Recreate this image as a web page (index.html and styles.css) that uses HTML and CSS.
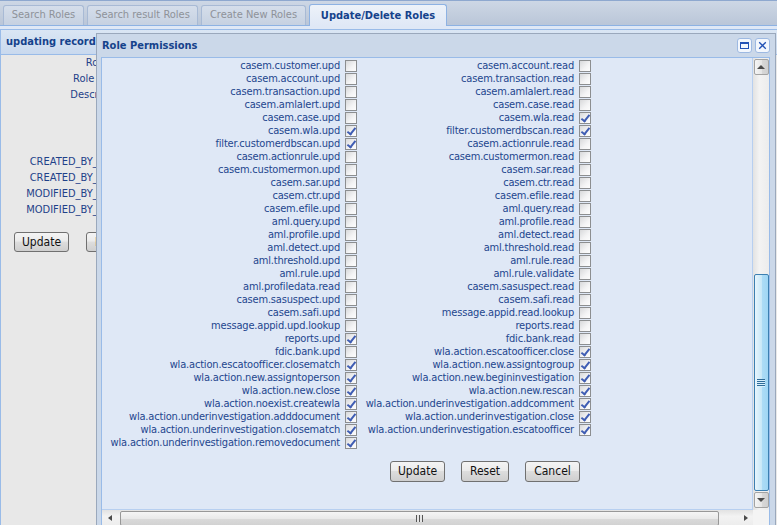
FILE: index.html
```html
<!DOCTYPE html>
<html>
<head>
<meta charset="utf-8">
<title>Update/Delete Roles</title>
<link rel="stylesheet" href="styles.css">
</head>
<body>
<div class="tabstrip">
  <div class="tab t1">Search Roles</div>
  <div class="tab t2">Search result Roles</div>
  <div class="tab t3">Create New Roles</div>
  <div class="tab t4 active">Update/Delete Roles</div>
</div>
<div class="tabgap"></div>
<div class="panel">
  <div class="panel-header">updating record</div>
  <div class="form">
    <div class="frow"><label>Role No.:</label></div>
    <div class="frow"><label>Role Name:</label></div>
    <div class="frow tall"><label>Description:</label></div>
    <div class="frow"><label>CREATED_BY_NAME:</label></div>
    <div class="frow"><label>CREATED_BY_NAME:</label></div>
    <div class="frow"><label>MODIFIED_BY_NAME:</label></div>
    <div class="frow"><label>MODIFIED_BY_NAME:</label></div>
    <div class="fbuttons">
      <button class="btn fb-update">Update</button>
      <button class="btn fb-reset">Reset</button>
    </div>
  </div>
</div>

<div class="modal">
  <div class="modal-head">
    <span class="modal-title">Role Permissions</span>
    <span class="tools">
      <span class="tool"><svg width="15" height="15" viewBox="0 0 15 15"><rect x="0.5" y="0.5" width="14" height="14" rx="2.5" fill="#f3f7fd" stroke="#9db9e2"/><rect x="3.5" y="4.5" width="8" height="6" fill="none" stroke="#2352b5"/><rect x="3" y="4" width="9" height="2" fill="#2352b5"/></svg></span>
      <span class="tool"><svg width="15" height="15" viewBox="0 0 15 15"><rect x="0.5" y="0.5" width="14" height="14" rx="2.5" fill="#f3f7fd" stroke="#9db9e2"/><path d="M4.2 4.2l6.6 6.6M10.8 4.2l-6.6 6.6" stroke="#2352b5" stroke-width="1.3" fill="none"/></svg></span>
    </span>
  </div>
  <div class="modal-body">
    <div class="content">
      <div class="perms">
        <label class="pl">casem.customer.upd</label><input type="checkbox" class="cb"><label class="pl">casem.account.read</label><input type="checkbox" class="cb">
        <label class="pl">casem.account.upd</label><input type="checkbox" class="cb"><label class="pl">casem.transaction.read</label><input type="checkbox" class="cb">
        <label class="pl">casem.transaction.upd</label><input type="checkbox" class="cb"><label class="pl">casem.amlalert.read</label><input type="checkbox" class="cb">
        <label class="pl">casem.amlalert.upd</label><input type="checkbox" class="cb"><label class="pl">casem.case.read</label><input type="checkbox" class="cb">
        <label class="pl">casem.case.upd</label><input type="checkbox" class="cb"><label class="pl">casem.wla.read</label><input type="checkbox" class="cb" checked>
        <label class="pl">casem.wla.upd</label><input type="checkbox" class="cb" checked><label class="pl">filter.customerdbscan.read</label><input type="checkbox" class="cb" checked>
        <label class="pl">filter.customerdbscan.upd</label><input type="checkbox" class="cb" checked><label class="pl">casem.actionrule.read</label><input type="checkbox" class="cb">
        <label class="pl">casem.actionrule.upd</label><input type="checkbox" class="cb"><label class="pl">casem.customermon.read</label><input type="checkbox" class="cb">
        <label class="pl">casem.customermon.upd</label><input type="checkbox" class="cb"><label class="pl">casem.sar.read</label><input type="checkbox" class="cb">
        <label class="pl">casem.sar.upd</label><input type="checkbox" class="cb"><label class="pl">casem.ctr.read</label><input type="checkbox" class="cb">
        <label class="pl">casem.ctr.upd</label><input type="checkbox" class="cb"><label class="pl">casem.efile.read</label><input type="checkbox" class="cb">
        <label class="pl">casem.efile.upd</label><input type="checkbox" class="cb"><label class="pl">aml.query.read</label><input type="checkbox" class="cb">
        <label class="pl">aml.query.upd</label><input type="checkbox" class="cb"><label class="pl">aml.profile.read</label><input type="checkbox" class="cb">
        <label class="pl">aml.profile.upd</label><input type="checkbox" class="cb"><label class="pl">aml.detect.read</label><input type="checkbox" class="cb">
        <label class="pl">aml.detect.upd</label><input type="checkbox" class="cb"><label class="pl">aml.threshold.read</label><input type="checkbox" class="cb">
        <label class="pl">aml.threshold.upd</label><input type="checkbox" class="cb"><label class="pl">aml.rule.read</label><input type="checkbox" class="cb">
        <label class="pl">aml.rule.upd</label><input type="checkbox" class="cb"><label class="pl">aml.rule.validate</label><input type="checkbox" class="cb">
        <label class="pl">aml.profiledata.read</label><input type="checkbox" class="cb"><label class="pl">casem.sasuspect.read</label><input type="checkbox" class="cb">
        <label class="pl">casem.sasuspect.upd</label><input type="checkbox" class="cb"><label class="pl">casem.safi.read</label><input type="checkbox" class="cb">
        <label class="pl">casem.safi.upd</label><input type="checkbox" class="cb"><label class="pl">message.appid.read.lookup</label><input type="checkbox" class="cb">
        <label class="pl">message.appid.upd.lookup</label><input type="checkbox" class="cb"><label class="pl">reports.read</label><input type="checkbox" class="cb">
        <label class="pl">reports.upd</label><input type="checkbox" class="cb" checked><label class="pl">fdic.bank.read</label><input type="checkbox" class="cb">
        <label class="pl">fdic.bank.upd</label><input type="checkbox" class="cb"><label class="pl">wla.action.escatoofficer.close</label><input type="checkbox" class="cb" checked>
        <label class="pl">wla.action.escatoofficer.closematch</label><input type="checkbox" class="cb" checked><label class="pl">wla.action.new.assigntogroup</label><input type="checkbox" class="cb" checked>
        <label class="pl">wla.action.new.assigntoperson</label><input type="checkbox" class="cb" checked><label class="pl">wla.action.new.begininvestigation</label><input type="checkbox" class="cb" checked>
        <label class="pl">wla.action.new.close</label><input type="checkbox" class="cb" checked><label class="pl">wla.action.new.rescan</label><input type="checkbox" class="cb" checked>
        <label class="pl">wla.action.noexist.createwla</label><input type="checkbox" class="cb" checked><label class="pl">wla.action.underinvestigation.addcomment</label><input type="checkbox" class="cb" checked>
        <label class="pl">wla.action.underinvestigation.adddocument</label><input type="checkbox" class="cb" checked><label class="pl">wla.action.underinvestigation.close</label><input type="checkbox" class="cb" checked>
        <label class="pl">wla.action.underinvestigation.closematch</label><input type="checkbox" class="cb" checked><label class="pl">wla.action.underinvestigation.escatoofficer</label><input type="checkbox" class="cb" checked>
        <label class="pl">wla.action.underinvestigation.removedocument</label><input type="checkbox" class="cb" checked><span class="pl"></span><span></span>
      </div>
      <div class="actions">
        <button class="btn mb-update">Update</button>
        <button class="btn mb-reset">Reset</button>
        <button class="btn mb-cancel">Cancel</button>
      </div>
    </div>
    <div class="vscroll">
      <div class="sbtn"><i class="tri-up"></i></div>
      <div class="vthumb"><i class="vgrip"></i></div>
      <div class="sbtn"><i class="tri-down"></i></div>
    </div>
    <div class="hscroll">
      <i class="tri-left"></i>
      <div class="hthumb"><i class="hgrip"></i></div>
      <i class="tri-right"></i>
    </div>
    <div class="corner"></div>
  </div>
</div>
</body>
</html>
```

FILE: styles.css
```css
* { box-sizing: border-box; }
html, body { margin: 0; padding: 0; }
body {
  width: 777px;
  height: 525px;
  overflow: hidden;
  position: relative;
  background: #e8e8e8;
  font-family: "DejaVu Sans Condensed", "DejaVu Sans", sans-serif;
  font-size: 11px;
  color: #15428b;
}

/* ---------- tab strip ---------- */
.tabstrip {
  height: 26px;
  display: flex;
  align-items: flex-end;
  gap: 3px;
  padding-left: 3px;
  background: linear-gradient(#cdd7e5, #bac6d8);
  border-top: 1px solid #8ea8cf;
  border-bottom: 1px solid #8db2e3;
}
.tab {
  height: 20px;
  line-height: 18px;
  text-align: center;
  white-space: nowrap;
  border: 1px solid #a8bad5;
  border-bottom: none;
  border-radius: 3px 3px 0 0;
  background: linear-gradient(#d5deeb, #c6d1e1);
  color: #8e9299;
  font-size: 11px;
}
.t1 { width: 81px; }
.t2 { width: 111px; }
.t3 { width: 105px; }
.t4 { width: 138px; }
.tab.active {
  height: 22px;
  line-height: 21px;
  margin-bottom: -1px;
  border-color: #8db2e3;
  background: linear-gradient(#edf2f9, #dfe8f6);
  color: #15428b;
  font-weight: bold;
}
.tabgap { height: 3px; background: #dfe8f6; }

/* ---------- background form panel ---------- */
.panel { border-left: 1px solid #99bbe8; height: 496px; }
.panel-header {
  height: 26px;
  line-height: 24px;
  padding-left: 5px;
  border-top: 1px solid #99bbe8;
  border-bottom: 1px solid #99bbe8;
  background: linear-gradient(#dae6f4, #c9d9ee);
  font-weight: bold;
  font-size: 11px;
  color: #15428b;
  white-space: nowrap;
}
.form { background: #e8e8e8; }
.frow { height: 16px; display: flex; }
.frow.tall { height: 67px; }
.frow label {
  width: 129px;
  flex: none;
  text-align: right;
  line-height: 16px;
  white-space: nowrap;
  color: #1f4189;
}
.fbuttons { display: flex; gap: 17px; padding-left: 13px; margin-top: 14px; }

.btn {
  height: 20px;
  padding: 0;
  border: 1px solid #707070;
  border-radius: 3px;
  background: linear-gradient(#f4f4f4, #ebebeb 45%, #dddddd 50%, #cfcfcf);
  font-family: "DejaVu Sans Condensed", "DejaVu Sans", sans-serif;
  font-size: 12px;
  color: #111;
  line-height: 17px;
}
.fb-update { width: 55px; }
.fb-reset { width: 48px; }

/* ---------- modal window ---------- */
.modal {
  position: absolute;
  left: 96px;
  top: 33px;
  width: 680px;
  height: 500px;
  border: 1px solid #9aa8bc;
  background: #cbd8e9;
  padding: 0 5px 0 4px;
  display: flex;
  flex-direction: column;
}
.modal-head {
  height: 23px;
  flex: none;
  display: flex;
  align-items: center;
  justify-content: space-between;
  padding-left: 1px;
}
.modal-title { font-weight: bold; font-size: 11px; color: #15428b; }
.tools { display: flex; gap: 3px; }
.tool { width: 15px; height: 15px; display: block; }
.tool svg { display: block; }

.modal-body {
  flex: none;
  border: 1px solid #99bbe8;
  display: grid;
  grid-template-columns: 651px 16px;
  grid-template-rows: 452px 16px;
  background: #f2f2f2;
}
.content {
  background: #dfe8f6;
  border-right: 1px solid #b7cff0;
  border-bottom: 1px solid #b7cff0;
  overflow: hidden;
  padding-top: 1px;
}
.perms {
  display: grid;
  grid-template-columns: 238px 17px 217px 17px;
  grid-auto-rows: 13px;
}
.pl {
  text-align: right;
  white-space: nowrap;
  line-height: 13px;
  font-size: 11px;
  letter-spacing: -0.18px;
  color: #23468e;
}
.cb {
  -webkit-appearance: none;
  appearance: none;
  display: block;
  position: relative;
  margin: 1px 0 0 5px;
  width: 12px;
  height: 12px;
  border: 1px solid #8c8e90;
  border-radius: 0;
  background: linear-gradient(135deg, #d8d9db, #f4f4f5 60%, #fdfdfd);
}
.cb:checked::after {
  content: "";
  position: absolute;
  left: 3px;
  top: 0px;
  width: 3px;
  height: 7px;
  border: solid #3f5db3;
  border-width: 0 2px 2px 0;
  transform: rotate(38deg);
}
.actions { display: flex; gap: 16px; padding-left: 288px; margin-top: 12px; }
.mb-update { width: 55px; height: 21px; }
.mb-reset { width: 48px; height: 21px; }
.mb-cancel { width: 55px; height: 21px; }

/* ---------- scrollbars ---------- */
.vscroll {
  display: flex;
  flex-direction: column;
  align-items: center;
  padding-top: 1px;
  background: linear-gradient(to right, #e2e2e2, #f3f3f3 40%, #ececec);
}
.sbtn {
  width: 15px;
  height: 16px;
  flex: none;
  border: 1px solid #a3a3a3;
  border-radius: 2px;
  background: linear-gradient(to right, #f5f5f5, #e6e6e6 50%, #d8d8d8 51%, #d0d0d0);
  display: flex;
  align-items: center;
  justify-content: center;
}
.tri-up { width: 0; height: 0; border-left: 4px solid transparent; border-right: 4px solid transparent; border-bottom: 4px solid #4a4a4a; }
.tri-down { width: 0; height: 0; border-left: 4px solid transparent; border-right: 4px solid transparent; border-top: 4px solid #4a4a4a; }
.vthumb {
  width: 15px;
  height: 217px;
  flex: none;
  margin-top: 199px;
  margin-bottom: 1px;
  border: 1px solid #3c7fb1;
  border-radius: 2px;
  background: linear-gradient(to right, #e7f5fd, #c9e8f8 50%, #aedcf6 51%, #a0d6f4);
  display: flex;
  align-items: center;
  justify-content: center;
}
.vgrip {
  width: 8px;
  height: 8px;
  background: repeating-linear-gradient(#2f6c99 0 1px, #d8effc 1px 2px);
}
.hscroll {
  display: flex;
  align-items: center;
  background: linear-gradient(#e2e2e2, #f3f3f3 40%, #ececec);
}
.tri-left { margin-left: 6px; width: 0; height: 0; border-top: 3.5px solid transparent; border-bottom: 3.5px solid transparent; border-right: 4px solid #4a4a4a; }
.tri-right { margin-left: 25px; width: 0; height: 0; border-top: 3.5px solid transparent; border-bottom: 3.5px solid transparent; border-left: 4px solid #4a4a4a; }
.hthumb {
  margin-left: 8px;
  width: 599px;
  height: 15px;
  border: 1px solid #979797;
  border-radius: 2px;
  background: linear-gradient(#f5f5f5, #e9e9e9 50%, #dadada 51%, #d2d2d2);
  display: flex;
  align-items: center;
  justify-content: center;
}
.hgrip {
  width: 7px;
  height: 7px;
  background: repeating-linear-gradient(to right, #555 0 1px, #e6e6e6 1px 3px);
}
.corner { background: #f4f4f4; }
```
